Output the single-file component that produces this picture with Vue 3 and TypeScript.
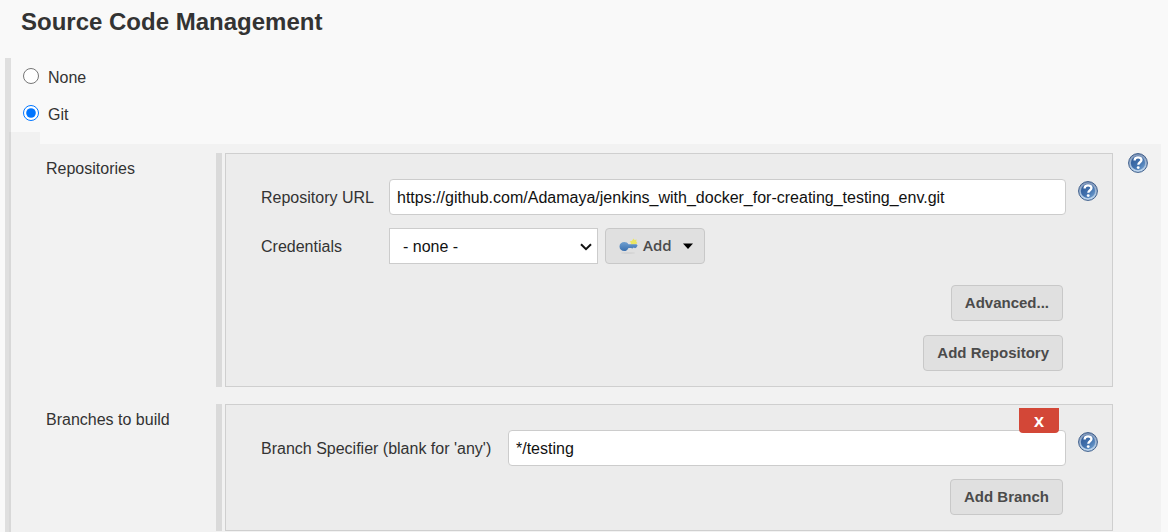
<script setup lang="ts">
import { ref } from 'vue'

const scm = ref<'none' | 'git'>('git')
const repositoryUrl = ref<string>('https://github.com/Adamaya/jenkins_with_docker_for-creating_testing_env.git')
const credentials = ref<string>('none')
const branch = ref<string>('*/testing')
</script>

<template>
  <svg class="defs" aria-hidden="true">
    <defs>
      <linearGradient id="ring" x1="0" y1="0" x2="0" y2="1">
        <stop offset="0" stop-color="#8095b7" />
        <stop offset="1" stop-color="#c3dcf3" />
      </linearGradient>
      <linearGradient id="disc" x1="0" y1="0" x2="1" y2="1">
        <stop offset="0" stop-color="#2c5795" />
        <stop offset="0.55" stop-color="#4272ae" />
        <stop offset="1" stop-color="#79a6d3" />
      </linearGradient>
      <linearGradient id="steel" x1="0" y1="0" x2="0" y2="1">
        <stop offset="0" stop-color="#6f9fd0" />
        <stop offset="1" stop-color="#3a70b0" />
      </linearGradient>
      <symbol id="help" viewBox="0 0 20 20">
        <circle cx="10" cy="10" r="9.4" fill="url(#ring)" stroke="#3b5b88" />
        <circle cx="10" cy="10" r="7.2" fill="url(#disc)" />
        <path d="M6.6 7.6C6.6 5.1 8.2 4.3 10.1 4.3C12.2 4.3 13.5 5.5 13.5 7.1C13.5 9.3 10.3 9.3 10.3 11.8" fill="none" stroke="#fff" stroke-width="2.3" />
        <circle cx="10.2" cy="14.6" r="1.4" fill="#fff" />
      </symbol>
    </defs>
  </svg>

  <main class="page">
    <h2 class="title">Source Code Management</h2>
    <div class="scm">
      <div class="options">
        <label class="option"><input v-model="scm" type="radio" name="scm" value="none" />None</label>
        <label class="option"><input v-model="scm" type="radio" name="scm" value="git" />Git</label>
      </div>

      <div class="git">
        <div class="indent"></div>
        <div class="settings">
          <section class="row">
            <h3 class="row-label">Repositories</h3>
            <div class="chunk">
              <div class="card">
                <div class="field">
                  <label class="name" for="url">Repository URL</label>
                  <input id="url" v-model="repositoryUrl" class="text" type="text" />
                  <button class="help" type="button" aria-label="Help for Repository URL"><svg><use href="#help" /></svg></button>
                </div>
                <div class="field">
                  <label class="name" for="credentials">Credentials</label>
                  <div class="credentials">
                    <div class="select-wrap">
                      <select id="credentials" v-model="credentials">
                        <option value="none">- none -</option>
                      </select>
                      <svg class="chevron" viewBox="0 0 12 8" aria-hidden="true"><path d="M1 1.2L6 6.2L11 1.2" fill="none" stroke="#111" stroke-width="2" /></svg>
                    </div>
                    <button class="button add" type="button">
                      <svg class="key" viewBox="0 0 20 18" aria-hidden="true">
                        <ellipse cx="9" cy="16" rx="7" ry="1" fill="#d4d4d4" />
                        <path d="M14.5 1.5L15.6 3L17.6 2.6L17.2 4.4L18.4 6L16.8 7.2L11.5 7.8L12 6L10.6 4.4L13 3.8Z" fill="#ebe663" />
                        <path d="M0.5 9.5C0.5 6.6 2.7 5 5.3 5C7.3 5 8.6 5.9 9.4 7.2H17.5L18.6 8.5L17.4 10.4L16 11.3L14.8 10.6L13.4 11.4L12 10.9H9.5C8.7 12.9 7.2 14 5.3 14C2.7 14 0.5 12.4 0.5 9.5Z" fill="url(#steel)" />
                      </svg>
                      <span class="add-text">Add</span>
                      <svg class="caret" viewBox="0 0 10 6" aria-hidden="true"><path d="M0 0.5H10L5 6Z" fill="#000" /></svg>
                    </button>
                  </div>
                </div>
                <div class="actions stacked">
                  <button class="button" type="button">Advanced...</button>
                  <button class="button" type="button">Add Repository</button>
                </div>
              </div>
            </div>
            <button class="help outer" type="button" aria-label="Help for Repositories"><svg><use href="#help" /></svg></button>
          </section>

          <section class="row">
            <h3 class="row-label">Branches to build</h3>
            <div class="chunk">
              <div class="card">
                <button class="delete" type="button" aria-label="Delete branch">X</button>
                <div class="field">
                  <label class="name wide" for="branch">Branch Specifier (blank for 'any')</label>
                  <input id="branch" v-model="branch" class="text" type="text" />
                  <button class="help" type="button" aria-label="Help for Branch Specifier"><svg><use href="#help" /></svg></button>
                </div>
                <div class="actions">
                  <button class="button" type="button">Add Branch</button>
                </div>
              </div>
            </div>
          </section>
        </div>
      </div>
    </div>
  </main>
</template>

<style>
body {
  margin: 0;
  background: #f9f9f9;
}
</style>

<style scoped>
* {
  box-sizing: border-box;
}

.defs {
  position: absolute;
  width: 0;
  height: 0;
}

.page {
  padding: 0 7px 0 5px;
  color: #333;
  font: 16px/20px "Liberation Sans", Arial, sans-serif;
}

.title {
  margin: 0;
  padding: 7px 0 21px 16px;
  font-size: 24px;
  line-height: 30px;
}

.scm {
  border-left: 6px solid #dfdfdf;
}

.options {
  display: flex;
  flex-direction: column;
  align-items: flex-start;
  gap: 17px;
  padding: 10px 0 7px 12px;
}

.option {
  display: flex;
  align-items: center;
  gap: 9px;
}

.option input {
  width: 16px;
  height: 16px;
  margin: 0 0 4px;
}

.git {
  display: grid;
  grid-template-columns: 29px 1fr;
}

.indent {
  margin-left: -2px;
  background: rgba(0, 0, 0, 0.03);
}

.settings {
  display: flex;
  flex-direction: column;
  gap: 17px;
  margin-top: 12px;
  padding: 9px 0 1px;
  background: #f2f2f2;
}

.row {
  display: grid;
  grid-template-columns: 176px 1fr 48px;
  align-items: start;
}

.row-label {
  margin: 0;
  padding: 6px 0 0 6px;
  font-size: 16px;
  font-weight: 400;
}

.chunk {
  padding-left: 3px;
  border-left: 6px solid #dadada;
}

.card {
  position: relative;
  display: flex;
  flex-direction: column;
  gap: 13px;
  padding: 25px 0 15px 35px;
  border: 1px solid #cfcfcf;
  background: #ececec;
}

.field {
  display: flex;
  align-items: center;
}

.name {
  flex: 0 0 128px;
  padding-top: 2px;
}

.name.wide {
  flex-basis: 247px;
}

.text {
  flex: 1;
  min-width: 0;
  height: 36px;
  padding: 2px 7px 0;
  border: 1px solid #ccc;
  border-radius: 4px;
  background: #fff;
  color: #111;
  font: inherit;
}

.help {
  flex: none;
  width: 20px;
  height: 20px;
  margin: 0 14px 12px 12px;
  padding: 0;
  border: 0;
  background: none;
}

.help.outer {
  margin: 0 0 0 15px;
}

.help svg {
  display: block;
  width: 20px;
  height: 20px;
}

.credentials {
  display: flex;
  gap: 7px;
}

.select-wrap {
  position: relative;
}

.select-wrap select {
  width: 209px;
  height: 36px;
  padding: 2px 13px 0;
  border: 1px solid #ccc;
  border-radius: 0;
  background: #fff;
  color: #111;
  font: inherit;
  appearance: none;
}

.chevron {
  position: absolute;
  top: 15px;
  right: 6px;
  width: 12px;
  height: 8px;
  pointer-events: none;
}

.button {
  height: 36px;
  padding: 0 13px;
  border: 1px solid #c8c8c8;
  border-radius: 4px;
  background: #e0e0e0;
  color: #4b4b4b;
  font: bold 15px/20px "Liberation Sans", Arial, sans-serif;
}

.add {
  display: flex;
  align-items: center;
  padding: 0 11px 0 13px;
  font: 600 15px/20px "Open Sans", "Noto Sans", sans-serif;
}

.add-text {
  padding-bottom: 2px;
}

.key {
  width: 20px;
  height: 18px;
  margin-right: 4px;
}

.caret {
  width: 10px;
  height: 6px;
  margin-left: 11px;
}

.actions {
  display: flex;
  flex-direction: column;
  align-items: flex-end;
  gap: 14px;
  padding-right: 49px;
}

.actions.stacked {
  padding-top: 8px;
}

.delete {
  position: absolute;
  top: 3px;
  right: 53px;
  width: 40px;
  height: 25px;
  padding: 0;
  border: 0;
  border-radius: 0 0 4px 4px;
  background: #d34737;
  color: #fff;
  font: bold 15px/20px "Noto Sans", "Open Sans", sans-serif;
}
</style>
